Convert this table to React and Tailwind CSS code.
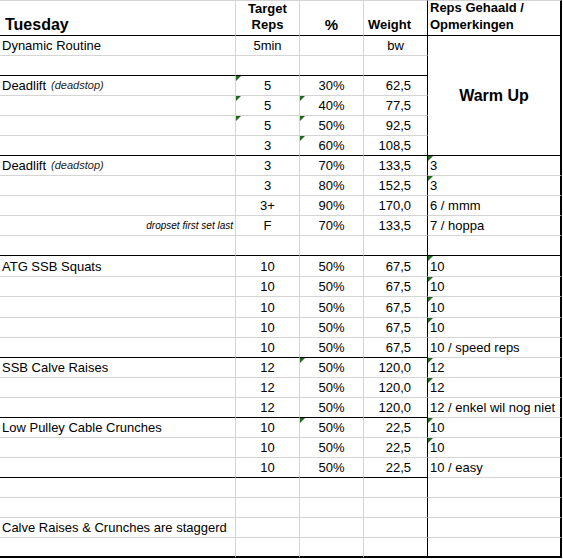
import React from "react"
import clsx from "clsx"

const rows = [
  { name: "Dynamic Routine", reps: "5min", weight: "bw", bw: true },
  { line: "left" },
  { name: "Deadlift", sub: "(deadstop)", reps: "5", pct: "30%", weight: "62,5", tri: [2] },
  { reps: "5", pct: "40%", weight: "77,5", tri: [2, 3] },
  { reps: "5", pct: "50%", weight: "92,5", tri: [2, 3] },
  { reps: "3", pct: "60%", weight: "108,5", tri: [3], line: "full" },
  { name: "Deadlift", sub: "(deadstop)", reps: "3", pct: "70%", weight: "133,5", note: "3", tri: [5] },
  { reps: "3", pct: "80%", weight: "152,5", note: "3", tri: [5] },
  { reps: "3+", pct: "90%", weight: "170,0", note: "6 / mmm" },
  { remark: "dropset first set last", reps: "F", pct: "70%", weight: "133,5", note: "7 / hoppa" },
  { line: "full" },
  { name: "ATG SSB Squats", reps: "10", pct: "50%", weight: "67,5", note: "10", tri: [5] },
  { reps: "10", pct: "50%", weight: "67,5", note: "10", tri: [5] },
  { reps: "10", pct: "50%", weight: "67,5", note: "10", tri: [5] },
  { reps: "10", pct: "50%", weight: "67,5", note: "10", tri: [5] },
  { reps: "10", pct: "50%", weight: "67,5", note: "10 / speed reps", line: "left" },
  { name: "SSB Calve Raises", reps: "12", pct: "50%", weight: "120,0", note: "12", tri: [3, 5] },
  { reps: "12", pct: "50%", weight: "120,0", note: "12", tri: [5] },
  { reps: "12", pct: "50%", weight: "120,0", note: "12 / enkel wil nog niet", line: "left" },
  { name: "Low Pulley Cable Crunches", reps: "10", pct: "50%", weight: "22,5", note: "10", tri: [3, 5] },
  { reps: "10", pct: "50%", weight: "22,5", note: "10", tri: [5] },
  { reps: "10", pct: "50%", weight: "22,5", note: "10 / easy", line: "left" },
  {},
  {},
  { name: "Calve Raises & Crunches are staggerd" },
  { line: "last" },
]

const Tri = () => (
  <svg className="absolute left-0 top-0" width="5" height="5" viewBox="0 0 5 5">
    <polygon points="0,0 5,0 0,5" fill="#1e6b1e" />
  </svg>
)

const Cell = ({ col, line, tri, className, children }) => {
  const black = line === "full" || (line === "left" && col < 5)
  return (
    <div
      className={clsx(
        "relative flex items-center overflow-hidden whitespace-nowrap border-b border-r border-[#d4d4d4] leading-[19px]",
        black && "border-b-black",
        line === "last" && "border-b-2 border-b-black",
        col === 4 && "border-r-black",
        col === 5 && "border-r-2 border-r-black",
        className
      )}
    >
      {tri && tri.includes(col) && <Tri />}
      {children}
    </div>
  )
}

export default function App() {
  return (
    <div className="w-[563px] h-[559px] bg-white text-black text-[13px] font-['Liberation_Sans',Arial,sans-serif]">
      <div className="grid grid-cols-[236px_64px_64px_64px_134px] grid-rows-[36px_repeat(11,20px)_21px_20px_21px_repeat(12,20px)]">
        {/* header */}
        <div className="flex items-end border-t border-b border-r border-[#d4d4d4] border-b-black pl-[5px] pb-[1px] text-[16px] font-bold leading-[18px]">
          Tuesday
        </div>
        <div className="flex items-end justify-center border-t border-b border-r border-[#d4d4d4] border-b-black pb-[2px] text-center font-bold leading-[16px]">
          Target
          <br />
          Reps
        </div>
        <div className="flex items-end justify-center border-t border-b border-r border-[#d4d4d4] border-b-black pb-[2px] text-[15px] font-bold leading-[16px]">
          %
        </div>
        <div className="flex items-end justify-end border-t border-b border-r border-[#d4d4d4] border-b-black border-r-black pb-[2px] pr-[16px] font-bold leading-[16px]">
          Weight
        </div>
        <div className="flex items-end border-t border-b border-r-2 border-[#d4d4d4] border-b-black border-r-black pb-[2px] pl-[2px] font-bold leading-[17px]">
          Reps Gehaald /
          <br />
          Opmerkingen
        </div>

        {rows.map((r, i) => (
          <React.Fragment key={i}>
            <Cell col={1} line={r.line} tri={r.tri} className={r.remark ? "justify-end pr-[2px]" : "pl-[2px]"}>
              {r.remark ? (
                <span className="text-[10px] italic">{r.remark}</span>
              ) : (
                <>
                  {r.name}
                  {r.sub && <span className="ml-[5px] text-[11px] italic text-[#222]">{r.sub}</span>}
                </>
              )}
            </Cell>
            <Cell col={2} line={r.line} tri={r.tri} className="justify-center">
              {r.reps}
            </Cell>
            <Cell col={3} line={r.line} tri={r.tri} className="justify-center">
              {r.pct}
            </Cell>
            <Cell col={4} line={r.line} tri={r.tri} className={r.bw ? "justify-center" : "justify-end pr-[16px]"}>
              {r.weight}
            </Cell>
            {i === 0 && (
              <div className="row-span-6 flex items-center justify-center border-b border-r-2 border-b-black border-r-black text-[16px] font-bold">
                Warm Up
              </div>
            )}
            {i > 5 && (
              <Cell col={5} line={r.line} tri={r.tri} className="pl-[2px]">
                {r.note}
              </Cell>
            )}
          </React.Fragment>
        ))}
      </div>
    </div>
  )
}
